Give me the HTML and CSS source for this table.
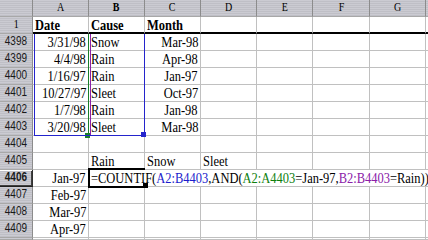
FILE: index.html
```html
<!DOCTYPE html>
<html>
<head>
<meta charset="utf-8">
<link rel="stylesheet" href="styles.css">
</head>
<body>
<div class="sheet">
  <div class="c h"></div>
  <div class="c h"><span class="t">A</span></div>
  <div class="c h b"><span class="t">B</span></div>
  <div class="c h"><span class="t">C</span></div>
  <div class="c h"><span class="t">D</span></div>
  <div class="c h"><span class="t">E</span></div>
  <div class="c h"><span class="t">F</span></div>
  <div class="c h"><span class="t">G</span></div>
  <div class="c h"></div>

  <div class="c h one"><span class="t">1</span></div>
  <div class="c top b"><span class="t">Date</span></div>
  <div class="c top b"><span class="t">Cause</span></div>
  <div class="c top b"><span class="t">Month</span></div>
  <div class="c top"></div><div class="c top"></div><div class="c top"></div><div class="c top"></div><div class="c top"></div>

  <div class="c h n"><span class="t">4398</span></div>
  <div class="c r"><span class="t">3/31/98</span></div>
  <div class="c"><span class="t">Snow</span></div>
  <div class="c r"><span class="t">Mar-98</span></div>
  <div class="c"></div><div class="c"></div><div class="c"></div><div class="c"></div><div class="c"></div>

  <div class="c h n"><span class="t">4399</span></div>
  <div class="c r"><span class="t">4/4/98</span></div>
  <div class="c"><span class="t">Rain</span></div>
  <div class="c r"><span class="t">Apr-98</span></div>
  <div class="c"></div><div class="c"></div><div class="c"></div><div class="c"></div><div class="c"></div>

  <div class="c h n"><span class="t">4400</span></div>
  <div class="c r"><span class="t">1/16/97</span></div>
  <div class="c"><span class="t">Rain</span></div>
  <div class="c r"><span class="t">Jan-97</span></div>
  <div class="c"></div><div class="c"></div><div class="c"></div><div class="c"></div><div class="c"></div>

  <div class="c h n"><span class="t">4401</span></div>
  <div class="c r"><span class="t">10/27/97</span></div>
  <div class="c"><span class="t">Sleet</span></div>
  <div class="c r"><span class="t">Oct-97</span></div>
  <div class="c"></div><div class="c"></div><div class="c"></div><div class="c"></div><div class="c"></div>

  <div class="c h n"><span class="t">4402</span></div>
  <div class="c r"><span class="t">1/7/98</span></div>
  <div class="c"><span class="t">Rain</span></div>
  <div class="c r"><span class="t">Jan-98</span></div>
  <div class="c"></div><div class="c"></div><div class="c"></div><div class="c"></div><div class="c"></div>

  <div class="c h n"><span class="t">4403</span></div>
  <div class="c r"><span class="t">3/20/98</span></div>
  <div class="c"><span class="t">Sleet</span></div>
  <div class="c r"><span class="t">Mar-98</span></div>
  <div class="c"></div><div class="c"></div><div class="c"></div><div class="c"></div><div class="c"></div>

  <div class="c h n"><span class="t">4404</span></div>
  <div class="c"></div><div class="c"></div><div class="c"></div><div class="c"></div><div class="c"></div><div class="c"></div><div class="c"></div><div class="c"></div>

  <div class="c h n"><span class="t">4405</span></div>
  <div class="c"></div>
  <div class="c"><span class="t">Rain</span></div>
  <div class="c"><span class="t">Snow</span></div>
  <div class="c"><span class="t">Sleet</span></div>
  <div class="c"></div><div class="c"></div><div class="c"></div><div class="c"></div>

  <div class="c h n b sel"><span class="t">4406</span></div>
  <div class="c r"><span class="t">Jan-97</span></div>
  <div class="c formula"><span class="t">=COUNTIF(<span class="rb">A2:B4403</span>,AND(<span class="rg">A2:A4403</span>=Jan-97,<span class="rp">B2:B4403</span>=Rain))</span></div>

  <div class="c h n"><span class="t">4407</span></div>
  <div class="c r"><span class="t">Feb-97</span></div>
  <div class="c"></div><div class="c"></div><div class="c"></div><div class="c"></div><div class="c"></div><div class="c"></div><div class="c"></div>

  <div class="c h n"><span class="t">4408</span></div>
  <div class="c r"><span class="t">Mar-97</span></div>
  <div class="c"></div><div class="c"></div><div class="c"></div><div class="c"></div><div class="c"></div><div class="c"></div><div class="c"></div>

  <div class="c h n"><span class="t">4409</span></div>
  <div class="c r"><span class="t">Apr-97</span></div>
  <div class="c"></div><div class="c"></div><div class="c"></div><div class="c"></div><div class="c"></div><div class="c"></div><div class="c"></div>

  <div class="c h"></div>
  <div class="c"></div><div class="c"></div><div class="c"></div><div class="c"></div><div class="c"></div><div class="c"></div><div class="c"></div><div class="c"></div>

  <div class="range green"></div>
  <div class="range purple"></div>
  <div class="range blue"></div>
  <div class="active"></div>
</div>
</body>
</html>
```

FILE: styles.css
```css
html, body {
  margin: 0;
  padding: 0;
  background: #ffffff;
}

.sheet {
  position: relative;
  display: grid;
  grid-template-columns: 33px 56px 56px 56px 56px 56px 57px 56px 1fr;
  grid-template-rows: repeat(14, 17px) 1fr;
  width: 428px;
  height: 240px;
  overflow: hidden;
  font-family: "Liberation Serif", "Times New Roman", serif;
  font-size: 15.6px;
  color: #000;
}

.c {
  box-sizing: border-box;
  display: flex;
  align-items: flex-end;
  min-width: 0;
  padding: 0 2px 1px;
  border-right: 1px solid #c0c0c0;
  border-bottom: 1px solid #c0c0c0;
  line-height: 15px;
  white-space: nowrap;
  overflow: hidden;
}

.t {
  display: inline-block;
  flex-shrink: 0;
  transform: scaleX(0.8);
  transform-origin: left bottom;
}

.r {
  justify-content: flex-end;
}

.r .t {
  transform-origin: right bottom;
}

.b {
  font-weight: bold;
}

.top {
  padding-bottom: 0;
  line-height: 14px;
  border-bottom: 2px solid #000;
}

.h {
  justify-content: center;
  font-size: 12.5px;
  background: repeating-linear-gradient(to bottom, #cbcbd2 0 1px, #bfbfc6 1px 2px);
  border-right: 1px solid #8c8c8c;
  border-bottom: 1px solid #a8a8a8;
}

.h .t {
  transform-origin: center bottom;
}

.n {
  font-family: "Liberation Sans", Arial, sans-serif;
  color: #1a1a1a;
}

.one {
  font-family: "Liberation Serif", "Times New Roman", serif;
}

.sel {
  box-shadow: inset 0 1px 0 #ffffff, inset -1px -1px 0 #404040;
  border-bottom-color: #202020;
  border-right-color: #303030;
}

.formula {
  grid-column: span 7;
  border-right: 0;
}

.rb { color: #1c1ccc; }
.rg { color: #0f7f0f; }
.rp { color: #8a20a8; }

.range {
  position: absolute;
  box-sizing: border-box;
  grid-row: 3 / 9;
  top: 0;
  bottom: 0;
  pointer-events: none;
}

.blue {
  grid-column: 2 / 4;
  left: 1px;
  right: 0;
  border: 1px solid #2424cc;
  border-top: 0;
  z-index: 3;
}

.blue::after {
  content: "";
  position: absolute;
  right: -2px;
  bottom: -2px;
  width: 5px;
  height: 5px;
  background: #2424cc;
}

.green {
  grid-column: 2 / 3;
  left: 0;
  right: 0;
  border-right: 1px solid #1b7f2b;
  z-index: 2;
}

.green::after {
  content: "";
  position: absolute;
  right: -2px;
  bottom: -2px;
  width: 5px;
  height: 5px;
  background: #1b7f2b;
}

.purple {
  grid-column: 3 / 4;
  left: 1px;
  right: 0;
  border-left: 1px solid #8a20a8;
  z-index: 2;
}

.active {
  position: absolute;
  box-sizing: border-box;
  grid-column: 3 / 4;
  grid-row: 11 / 12;
  top: -2px;
  left: -1px;
  right: 0;
  bottom: -1px;
  border: 2px solid #000;
  border-right: 0;
  z-index: 4;
  pointer-events: none;
}

.active::after {
  content: "";
  position: absolute;
  right: -3px;
  bottom: -2px;
  width: 5px;
  height: 5px;
  background: #000;
}
```
